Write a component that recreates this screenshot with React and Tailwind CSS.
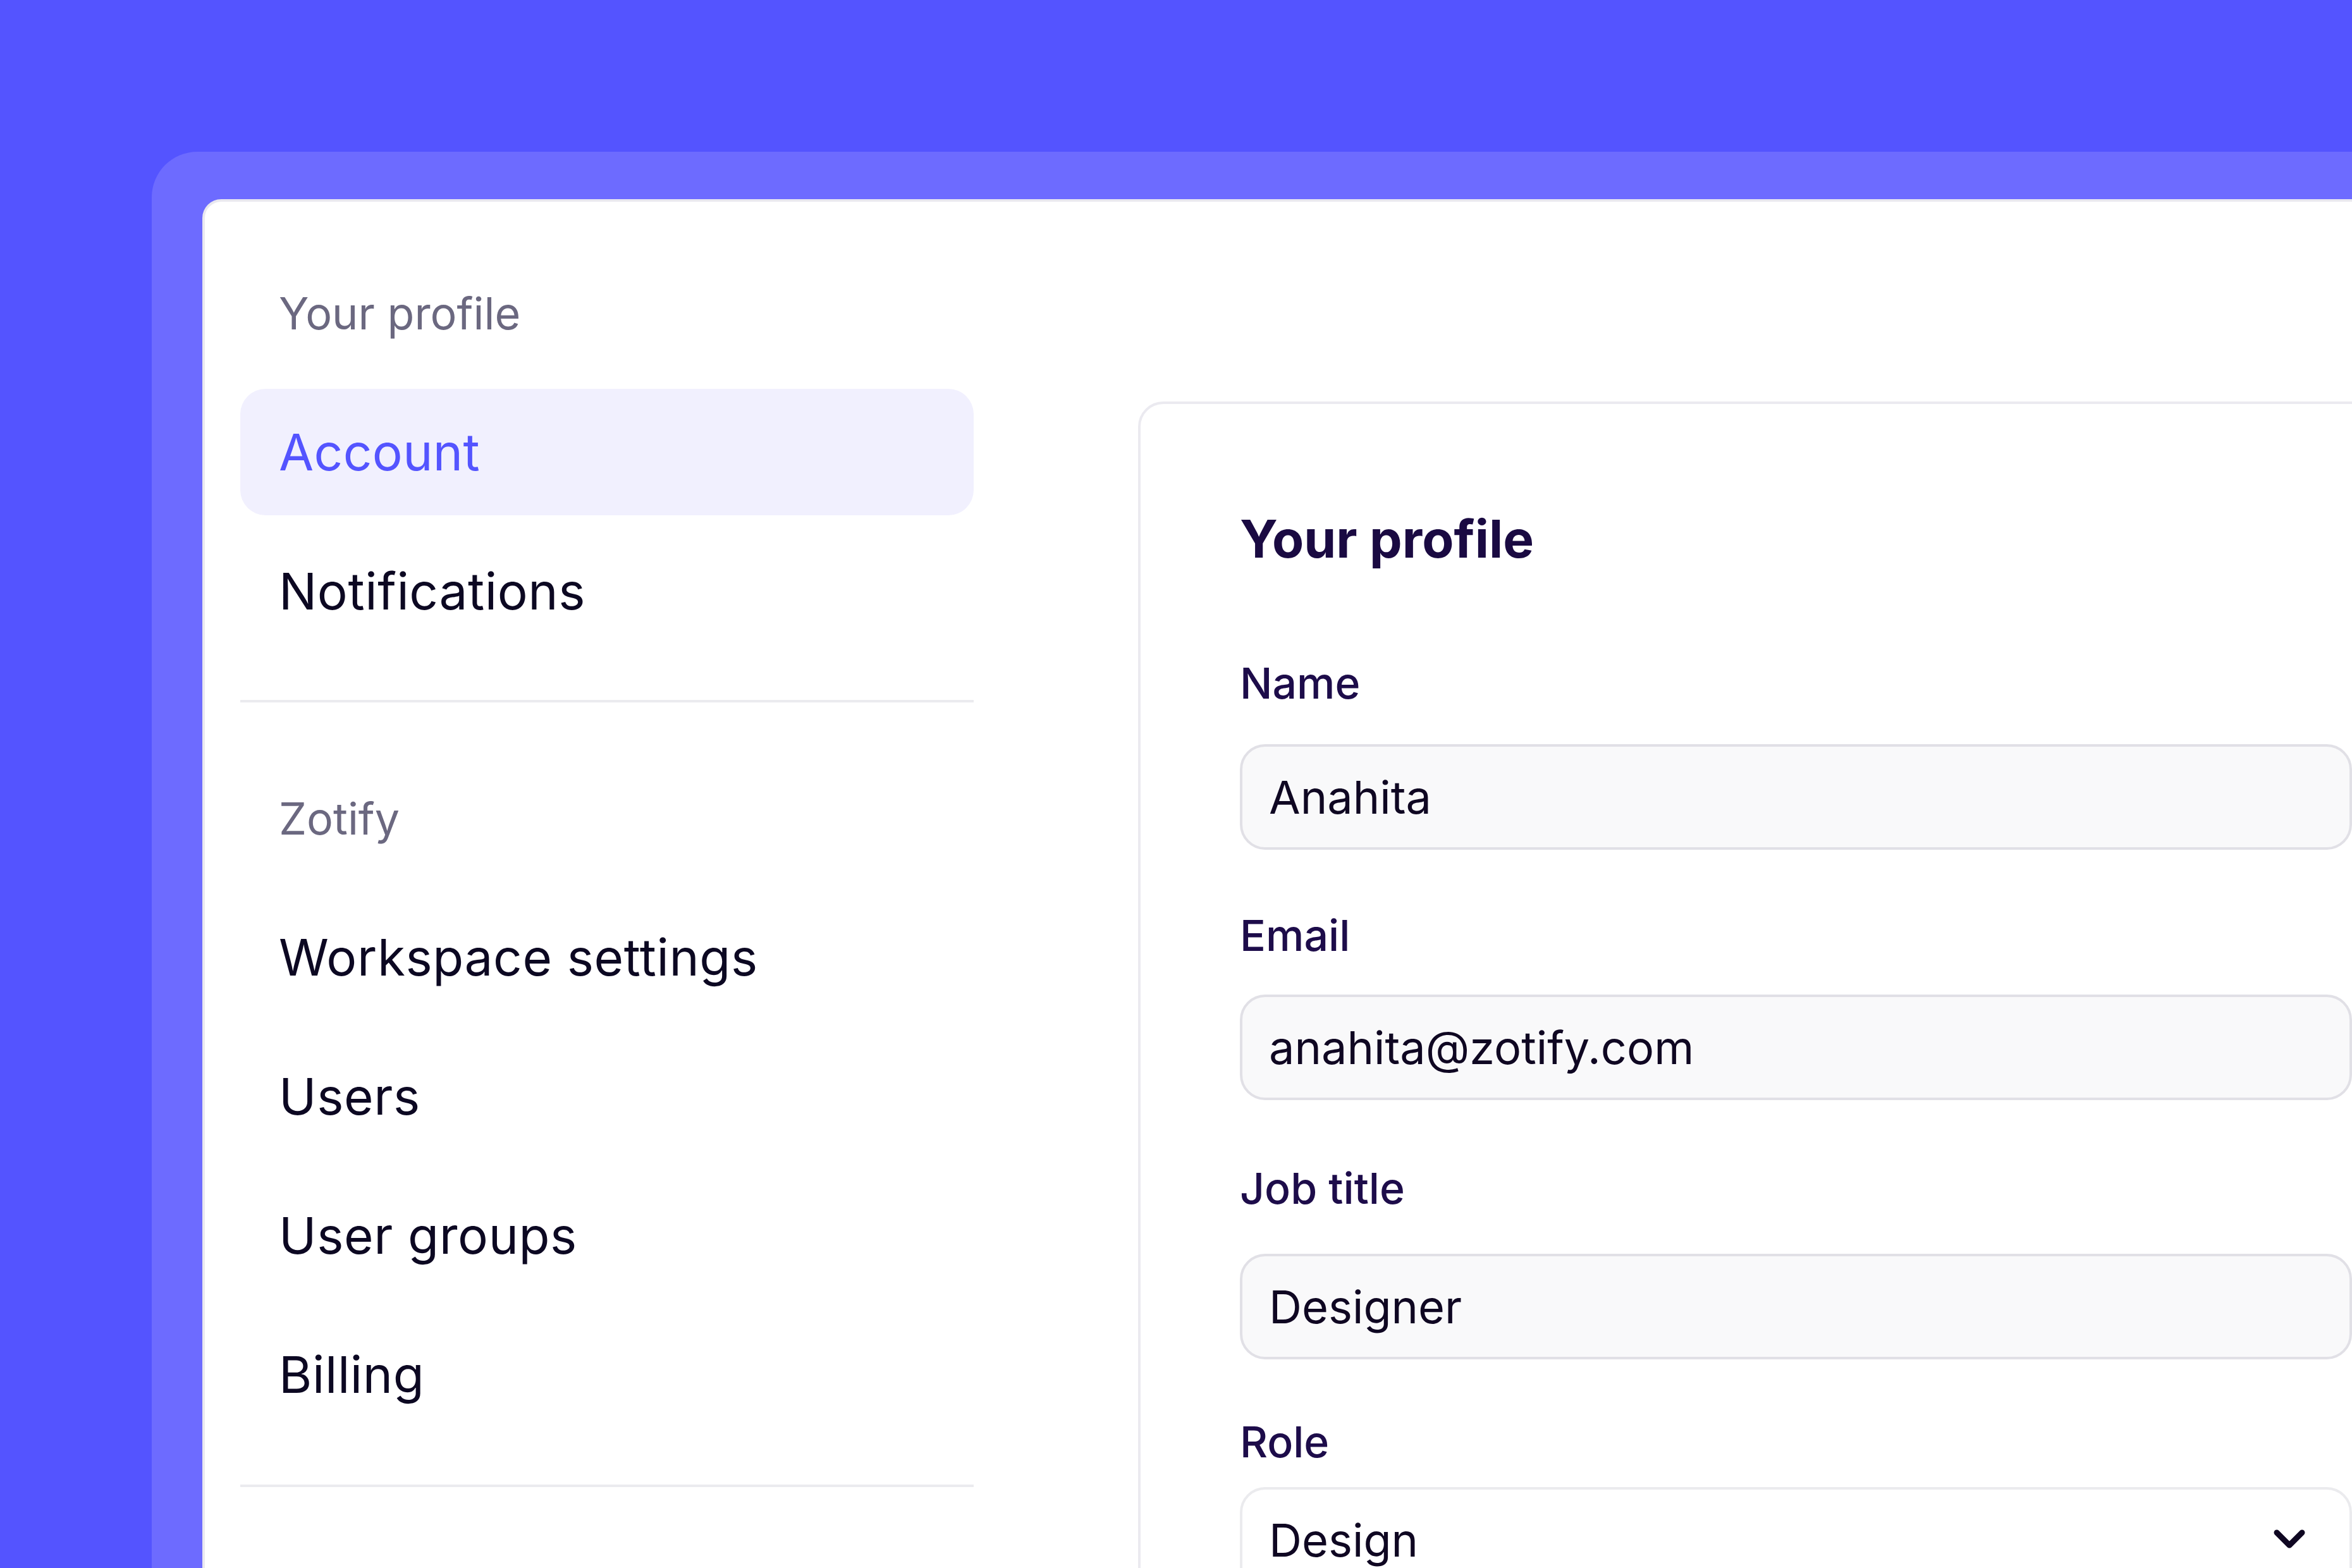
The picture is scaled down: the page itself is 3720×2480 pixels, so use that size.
import React from "react";

const font = { fontFamily: "Inter, 'Noto Sans', sans-serif" };

function NavLabel({ children }) {
  return (
    <div className="h-[200px] flex items-center pl-[61px] text-[70px] text-[#6b6880]">
      {children}
    </div>
  );
}

function NavItem({ children, active }) {
  return (
    <div
      className={
        active
          ? "h-[200px] flex items-center pl-[61px] rounded-[40px] bg-[#f1f0fe] text-[80px] tracking-[0.4px] text-[#5454ff]"
          : "h-[200px] flex items-center pl-[61px] rounded-[40px] text-[80px] tracking-[0.6px] text-[#0c0822]"
      }
    >
      {children}
    </div>
  );
}

function Field({ label, value, labelMt, inputMt }) {
  return (
    <div className="flex flex-col">
      <div
        className="h-[80px] leading-[80px] text-[68px] font-medium text-[#1d0c4a]"
        style={{ marginTop: labelMt }}
      >
        {label}
      </div>
      <div
        className="h-[167px] w-[1759px] rounded-[40px] border-[4px] border-[#e1e0e6] bg-[#f9f9fa] flex items-center pl-[42px] text-[72px] text-[#0f0722]"
        style={{ marginTop: inputMt }}
      >
        {value}
      </div>
    </div>
  );
}

export default function App() {
  return (
    <div
      className="w-[3720px] h-[2480px] overflow-hidden bg-[#5454ff] pl-[240px] pt-[240px]"
      style={font}
    >
      <div className="w-[3600px] h-[2400px] rounded-tl-[72px] bg-[#6d6bff] pl-[80px] pt-[75px]">
        <div className="w-[3500px] h-[2300px] rounded-tl-[30px] border-[4px] border-[#e9e8ef] bg-white flex items-start pl-[56px]">
          {/* Sidebar */}
          <div className="w-[1160px] shrink-0 pt-[76px] flex flex-col">
            <div className="flex flex-col gap-[20px]">
              <NavLabel>Your profile</NavLabel>
              <NavItem active>Account</NavItem>
              <NavItem>Notifications</NavItem>
            </div>
            <div className="mt-[72px] h-[4px] bg-[#ebebef]" />
            <div className="mt-[83px] flex flex-col gap-[20px]">
              <NavLabel>Zotify</NavLabel>
              <NavItem>Workspace settings</NavItem>
              <NavItem>Users</NavItem>
              <NavItem>User groups</NavItem>
              <NavItem>Billing</NavItem>
            </div>
            <div className="mt-[74px] h-[4px] bg-[#ebebef]" />
          </div>

          {/* Content card */}
          <div className="ml-[260px] mt-[316px] w-[2200px] h-[2000px] shrink-0 rounded-tl-[40px] border-[4px] border-[#ebeaf0] bg-white pl-[157px] pt-[166px] flex flex-col">
            <div className="h-[96px] leading-[96px] text-[82px] font-bold text-[#1a0a42]">
              Your profile
            </div>
            <Field label="Name" value="Anahita" labelMt={139} inputMt={57} />
            <Field label="Email" value="anahita@zotify.com" labelMt={95} inputMt={54} />
            <Field label="Job title" value="Designer" labelMt={99} inputMt={64} />
            <div className="flex flex-col">
              <div className="mt-[90px] h-[80px] leading-[80px] text-[68px] font-medium text-[#1d0c4a]">
                Role
              </div>
              <div className="mt-[32px] h-[167px] w-[1759px] rounded-[40px] border-[4px] border-[#ebebee] bg-white flex items-center justify-between pl-[42px] pr-[70px] text-[72px] text-[#0f0722]">
                <span>Design</span>
                <svg width="50" height="30" viewBox="0 0 50 30" fill="none" className="-mt-[4px]">
                  <path
                    d="M5 5 L25 25 L45 5"
                    stroke="#0f0722"
                    strokeWidth="9"
                    strokeLinecap="round"
                    strokeLinejoin="round"
                  />
                </svg>
              </div>
            </div>
          </div>
        </div>
      </div>
    </div>
  );
}
